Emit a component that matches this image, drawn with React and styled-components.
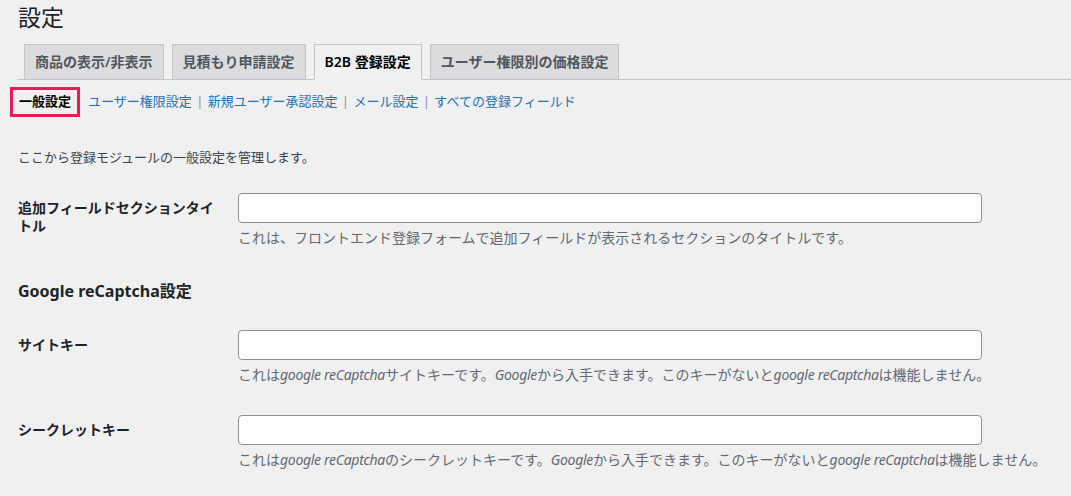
import styled, { createGlobalStyle } from "styled-components";

const GlobalStyle = createGlobalStyle`
    html, body {
        margin: 0;
        padding: 0;
        background: #f0f0f1;
    }
    body {
        font-family: "Segoe UI", "Noto Sans", "Noto Sans CJK JP", sans-serif;
        color: #3c434a;
        font-size: 13px;
    }
`

// 画面全体
const Wrap = styled.div`
    box-sizing: border-box;
    width: 1071px;
    height: 496px;
    overflow: hidden;
    padding-left: 17px;
`

const Title = styled.h1`
    margin: 0;
    padding: 2px 0 0 1px;
    font-size: 23px;
    font-weight: 400;
    line-height: 30px;
    color: #1d2327;
`

// タブ
const TabBar = styled.nav`
    display: flex;
    margin-top: 12px;
    border-bottom: 1px solid #c3c4c7;
`

const Tab = styled.a`
    box-sizing: border-box;
    display: block;
    margin: 0 0 -1px 8px;
    &:first-child { margin-left: 7px; }
    padding: 5px 10px;
    font-size: 14px;
    font-weight: 600;
    line-height: 24px;
    border: 1px solid #c3c4c7;
    background: ${p => (p.$active ? "#f0f0f1" : "#dcdcde")};
    border-bottom-color: ${p => (p.$active ? "#f0f0f1" : "#c3c4c7")};
    color: ${p => (p.$active ? "#000" : "#50575e")};
    white-space: nowrap;
`

// サブメニュー
const SubNav = styled.ul`
    display: flex;
    align-items: center;
    list-style: none;
    margin: 7px 0 0;
    padding: 0;
    font-size: 13px;
    height: 30px;
`

const Current = styled.li`
    box-sizing: border-box;
    margin-left: -7px;
    margin-right: 8px;
    height: 30px;
    padding: 0 6px 2px;
    border: 3px solid #ee1b5b;
    font-weight: 700;
    color: #000;
    line-height: 22px;
`

const SubLink = styled.li`
    color: #2271b1;
    white-space: pre;
    margin-bottom: 4px;
`

const Sep = styled.span`
    color: #8c8f94;
    padding: 0 1px;
`

const Intro = styled.p`
    margin: 30px 0 11px 1px;
    font-size: 13px;
    line-height: 20px;
    color: #3c434a;
`

// フォーム
const Row = styled.div`
    display: grid;
    grid-template-columns: 211px 1fr;
`

const Label = styled.div`
    padding: 21px 10px 20px 1px;
    width: 200px;
    font-size: 14px;
    font-weight: 700;
    line-height: 18px;
    color: #1d2327;
`

const Field = styled.div`
    padding: 15px 10px;
`

const Input = styled.input`
    box-sizing: border-box;
    display: block;
    width: 744px;
    height: 30px;
    border: 1px solid #8c8f94;
    border-radius: 4px;
    background: #fff;
    margin: 0;
`

const Desc = styled.p`
    margin: 4px 0 0;
    font-size: 14px;
    line-height: 21px;
    color: #646970;
    white-space: nowrap;
    em {
        font-style: italic;
        letter-spacing: -0.3px;
    }
`

const Heading = styled.h2`
    margin: 17px 0 13px 1px;
    font-size: 16px;
    font-weight: 700;
    line-height: 22px;
    color: #1d2327;
`

const tabs = ["商品の表示/非表示", "見積もり申請設定", "B2B 登録設定", "ユーザー権限別の価格設定"];
const links = ["ユーザー権限設定", "新規ユーザー承認設定", "メール設定", "すべての登録フィールド"];

export default function App() {
    return (
        <Wrap>
            <GlobalStyle />
            <Title>設定</Title>
            <TabBar>
                {tabs.map((t, i) => (
                    <Tab key={t} $active={i === 2}>{t}</Tab>
                ))}
            </TabBar>
            <SubNav>
                <Current>一般設定</Current>
                {links.map((l, i) => (
                    <SubLink key={l}>
                        {l}
                        {i < links.length - 1 && <Sep> | </Sep>}
                    </SubLink>
                ))}
            </SubNav>
            <Intro>ここから登録モジュールの一般設定を管理します。</Intro>

            <Row>
                <Label>追加フィールドセクションタイトル</Label>
                <Field>
                    <Input type="text" />
                    <Desc>これは、フロントエンド登録フォームで追加フィールドが表示されるセクションのタイトルです。</Desc>
                </Field>
            </Row>

            <Heading>Google reCaptcha設定</Heading>

            <Row>
                <Label>サイトキー</Label>
                <Field>
                    <Input type="text" />
                    <Desc>
                        これは<em>google reCaptcha</em>サイトキーです。<em>Google</em>から入手できます。このキーがないと<em>google reCaptcha</em>は機能しません。
                    </Desc>
                </Field>
            </Row>
            <Row>
                <Label>シークレットキー</Label>
                <Field>
                    <Input type="text" />
                    <Desc>
                        これは<em>google reCaptcha</em>のシークレットキーです。<em>Google</em>から入手できます。このキーがないと<em>google reCaptcha</em>は機能しません。
                    </Desc>
                </Field>
            </Row>
        </Wrap>
    );
}
